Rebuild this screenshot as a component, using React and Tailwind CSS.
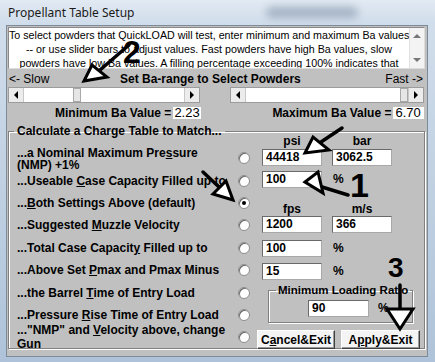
import React from "react";

function Radio({ checked }) {
  return (
    <span className="w-[12px] h-[12px] shrink-0 rounded-full bg-white border border-[#8c8c8c] shadow-[inset_1px_1px_0_#6a6a6a] flex items-center justify-center">
      {checked && <span className="w-[4px] h-[4px] rounded-full bg-black" />}
    </span>
  );
}

function Field({ value, className = "" }) {
  return (
    <div
      className={
        "h-[17px] shrink-0 bg-white border border-[#6a6a6a] border-r-[#a8a8a8] border-b-[#a8a8a8] pl-[3px] text-[12px] font-bold leading-[15px] " +
        className
      }
    >
      {value}
    </div>
  );
}

function Tri({ dir, color = "#000" }) {
  const pts = {
    left: "5,0 5,8 1,4",
    right: "1,0 1,8 5,4",
    up: "0,5 8,5 4,1",
    down: "0,1 8,1 4,5",
  }[dir];
  const horiz = dir === "left" || dir === "right";
  return (
    <svg width={horiz ? 6 : 8} height={horiz ? 8 : 6} viewBox={horiz ? "0 0 6 8" : "0 0 8 6"}>
      <polygon points={pts} fill={color} />
    </svg>
  );
}

function Slider({ className, thumb }) {
  return (
    <div className={"h-[16px] flex bg-white border border-[#9c9c9c] " + className}>
      <div className="w-[15px] h-full shrink-0 bg-[#ececec] border-r border-[#c8c8c8] flex items-center justify-center">
        <Tri dir="left" />
      </div>
      <div className="flex-1 flex">
        <div className={"w-[8px] h-full bg-[#e6e6e6] border border-[#a8a8a8] " + thumb} />
      </div>
      <div className="w-[15px] h-full shrink-0 bg-[#ececec] border-l border-[#c8c8c8] flex items-center justify-center">
        <Tri dir="right" />
      </div>
    </div>
  );
}

const rows = [
  { label: <>...a Nominal Maximum Pre<u>s</u>sure<br />(NMP) +1%</>, lead: "leading-[12px] pt-[1px]" },
  { label: <>...Useable <u>C</u>ase Capacity Filled up to</> },
  { label: <>...<u>B</u>oth Settings Above (default)</>, checked: true },
  { label: <>...Suggested <u>M</u>uzzle Velocity</> },
  { label: <>...Total Case Capacit<u>y</u> Filled up to</> },
  { label: <>...Above Set <u>P</u>max and Pmax Minus</> },
  { label: <>...the Barrel <u>T</u>ime of Entry Load</> },
  { label: <>...Pressure <u>R</u>ise Time of Entry Load</> },
  { label: <>..."NMP" and <u>V</u>elocity above, change<br />Gun</>, lead: "leading-[14px]" },
];

export default function App() {
  return (
    <div className="relative w-[435px] h-[362px] overflow-hidden bg-gradient-to-b from-[#d3dfec] to-[#aec3d9] font-['Liberation_Sans',Arial,sans-serif] text-black whitespace-nowrap">
      {/* title bar */}
      <div className="h-[25px] flex items-center pl-[8px] bg-gradient-to-b from-[#e2eaf3] to-[#cfdcea]">
        <span className="font-['Noto_Sans',sans-serif] text-[12px] text-[#1a1a1a]">Propellant Table Setup</span>
        <span className="ml-[132px] w-[92px] h-[11px] rounded-full bg-[#8b9cb0] blur-[4px] opacity-70" />
      </div>

      {/* client */}
      <div className="ml-[6px] w-[422px] h-[332px] bg-[#c0c0c0] border border-[#7d8a98] px-[1px] flex flex-col">
        {/* description */}
        <div className="mt-[1px] h-[42px] w-[417px] flex bg-white border border-[#8a8a8a] border-r-[#dcdcdc] border-b-[#dcdcdc] overflow-hidden">
          <div className="flex-1 text-center text-[10.7px] leading-[14px] overflow-hidden">
            <div>To select powders that QuickLOAD will test, enter minimum and maximum Ba values</div>
            <div>-- or use slider bars to adjust values. Fast powders have high Ba values, slow</div>
            <div>powders have low Ba values. A filling percentage exceeding 100% indicates that</div>
          </div>
          <div className="w-[15px] shrink-0 bg-[#f3f3f3] border-l border-[#e0e0e0] flex flex-col items-center justify-between py-[5px]">
            <Tri dir="up" color="#777" />
            <Tri dir="down" color="#777" />
          </div>
        </div>

        {/* slider labels */}
        <div className="h-[18px] flex items-center text-[12px] pt-[1px]">
          <span className="ml-[1px] w-[111px]">&lt;- Slow</span>
          <span className="font-bold">Set Ba-range to Select Powders</span>
          <span className="ml-auto mr-[3px]">Fast -&gt;</span>
        </div>

        {/* sliders */}
        <div className="h-[16px] flex">
          <Slider className="w-[192px]" thumb="ml-[49px]" />
          <Slider className="ml-[30px] w-[194px]" thumb="ml-[154px]" />
        </div>

        {/* min / max */}
        <div className="mt-[1px] h-[18px] flex items-center text-[12px]">
          <span className="ml-[47px] font-bold">Minimum Ba Value =</span>
          <span className="ml-[2px] w-[28px] h-[12px] shrink-0 bg-white text-[13px] leading-[12px] pl-[1px]">2.23</span>
          <span className="ml-[71px] font-bold">Maximum Ba Value =</span>
          <span className="ml-[2px] w-[31px] h-[12px] shrink-0 bg-white text-[13px] leading-[12px] pl-[2px]">6.70</span>
        </div>

        {/* group */}
        <fieldset className="mt-[4px] w-[417px] h-[223px] border border-[#808080] shadow-[inset_1px_1px_0_#fff,1px_1px_0_#fff] pl-[8px] text-[12px] font-bold">
          <legend className="ml-[-3px] px-[3px] leading-[10px]">Calculate a Charge Table to Match...</legend>
          <div className="flex">
            <div className="mt-[11px] flex flex-col">
              {rows.map((r, i) => (
                <div key={i} className="h-[22.4px] flex items-center">
                  <div className={"w-[221px] " + (r.lead || "leading-[14px]")}>{r.label}</div>
                  <Radio checked={r.checked} />
                </div>
              ))}
            </div>

            <div className="ml-[7px] w-[164px] flex flex-col">
              <div className="h-[10px] flex leading-[10px]">
                <span className="ml-[5px] w-[60px] text-center">psi</span>
                <span className="ml-[10px] w-[60px] text-center">bar</span>
              </div>
              <div className="mt-[3px] flex">
                <Field value="44418" className="ml-[5px] w-[60px]" />
                <Field value="3062.5" className="ml-[10px] w-[60px]" />
              </div>
              <div className="mt-[4px] flex items-center">
                <Field value="100" className="ml-[5px] w-[60px]" />
                <span className="ml-[11px]">%</span>
              </div>
              <div className="mt-[15px] h-[12px] flex leading-[12px]">
                <span className="ml-[5px] w-[60px] text-center">fps</span>
                <span className="ml-[10px] w-[60px] text-center">m/s</span>
              </div>
              <div className="mt-[1px] flex">
                <Field value="1200" className="ml-[5px] w-[60px]" />
                <Field value="366" className="ml-[10px] w-[60px]" />
              </div>
              <div className="mt-[6px] flex items-center">
                <Field value="100" className="ml-[5px] w-[60px]" />
                <span className="ml-[11px]">%</span>
              </div>
              <div className="mt-[5px] flex items-center">
                <Field value="15" className="ml-[5px] w-[60px]" />
                <span className="ml-[11px]">%</span>
              </div>
              <fieldset className="mt-[4px] ml-[11px] w-[145px] h-[39px] border border-[#808080] shadow-[inset_1px_1px_0_#fff,1px_1px_0_#fff]">
                <legend className="ml-[7px] px-[2px] leading-[12px] text-[11.5px]">Minimum Loading Ratio</legend>
                <div className="mt-[3px] ml-[39px] flex items-center">
                  <Field value="90" className="w-[61px]" />
                  <span className="ml-[9px]">%</span>
                </div>
              </fieldset>
              <div className="mt-[7px] flex">
                <button className="w-[78px] h-[19px] shrink-0 bg-[#f4f4f4] border border-[#fff] border-r-[#404040] border-b-[#404040] shadow-[inset_-1px_-1px_0_#9a9a9a] text-[12px] font-bold leading-[16px]">
                  C<u>a</u>ncel&amp;Exit
                </button>
                <button className="ml-[6px] w-[79px] h-[19px] shrink-0 bg-[#f4f4f4] border border-[#fff] border-r-[#404040] border-b-[#404040] shadow-[inset_-1px_-1px_0_#9a9a9a] text-[12px] font-bold leading-[16px]">
                  A<u>p</u>ply&amp;Exit
                </button>
              </div>
            </div>
          </div>
        </fieldset>
      </div>

      {/* hand-drawn annotations */}
      <svg className="absolute inset-0 pointer-events-none" width="435" height="362" viewBox="0 0 435 362">
        <g stroke="#000" strokeWidth="3.5" fill="none" strokeLinecap="round">
          <line x1="129" y1="45" x2="100" y2="70" />
          <line x1="342" y1="128" x2="321" y2="142" />
          <line x1="348" y1="195" x2="322" y2="187" />
          <line x1="203" y1="172" x2="219" y2="187" />
          <line x1="400" y1="285" x2="400" y2="309" />
        </g>
        <g stroke="#000" strokeWidth="3" fill="#fff" strokeLinejoin="miter">
          <polygon points="84,81 92,65 107,77" />
          <polygon points="305,153 313,137 329,150" />
          <polygon points="305,182 318,172 323,193" />
          <polygon points="233,200 213,194 226,181" />
          <polygon points="387,309 413,309 400,329" />
        </g>
        <g fontFamily="'Liberation Sans', Arial, sans-serif" fontWeight="bold" fill="#000">
          <text x="123" y="63" fontSize="32">2</text>
          <text x="350" y="197" fontSize="34">1</text>
          <text x="388" y="277" fontSize="28">3</text>
        </g>
      </svg>
    </div>
  );
}
